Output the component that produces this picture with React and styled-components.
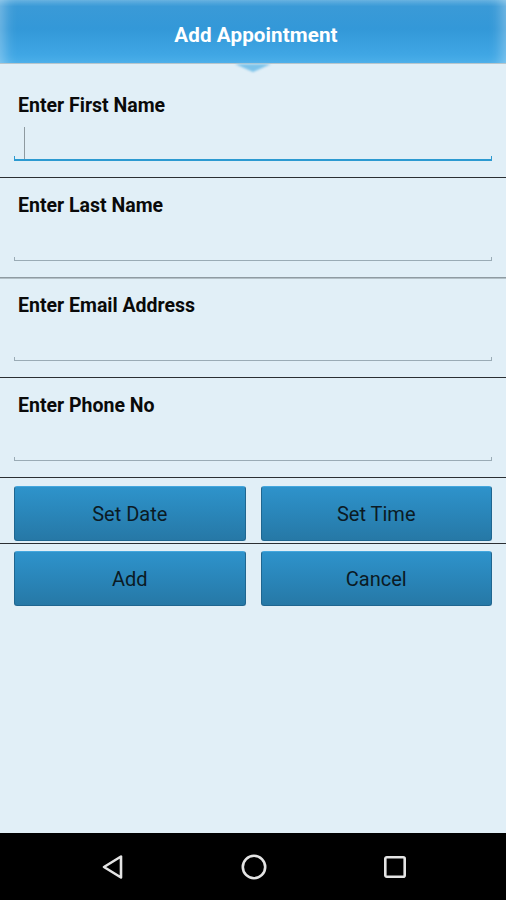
import styled, { createGlobalStyle } from "styled-components";

const GlobalStyle = createGlobalStyle`
  html, body {
    margin: 0;
    padding: 0;
    background: #e1eff7;
  }

  body {
    font-family: Roboto, "Noto Sans", "Liberation Sans", sans-serif;
  }
`;

const fields = [
  { label: "Enter First Name", focused: true },
  { label: "Enter Last Name", soft: true },
  { label: "Enter Email Address" },
  { label: "Enter Phone No" },
];

export default function App() {
  return (
    <>
      <GlobalStyle />
      <Screen>
        <Header>
          <strong className="title">Add Appointment</strong>
        </Header>

        <Content>
          {fields.map((f) => (
            <Field key={f.label} $soft={f.soft}>
              <Label>{f.label}</Label>
              <InputLine $focused={f.focused}>
                {f.focused && <Caret />}
              </InputLine>
            </Field>
          ))}

          <ButtonRow $divider>
            <Button>Set Date</Button>
            <Button>Set Time</Button>
          </ButtonRow>

          <ButtonRow $top={7}>
            <Button>Add</Button>
            <Button>Cancel</Button>
          </ButtonRow>
        </Content>

        <NavBar>
          <svg width="26" height="28" viewBox="0 0 26 28">
            <path
              d="M21 3.5 L21 24.5 L4 14 Z"
              fill="none"
              stroke="#e4e4e4"
              strokeWidth="2.6"
              strokeLinejoin="round"
            />
          </svg>
          <svg width="28" height="28" viewBox="0 0 28 28">
            <circle
              cx="14"
              cy="14"
              r="11.2"
              fill="none"
              stroke="#e4e4e4"
              strokeWidth="2.6"
            />
          </svg>
          <svg width="26" height="26" viewBox="0 0 26 26">
            <rect
              x="3.3"
              y="3.3"
              width="19.4"
              height="19.4"
              rx="1.5"
              fill="none"
              stroke="#e4e4e4"
              strokeWidth="2.6"
            />
          </svg>
        </NavBar>
      </Screen>
    </>
  );
}

const Screen = styled.main`
  display: flex;
  flex-direction: column;
  width: 506px;
  height: 900px;
  background: #e1eff7;
  overflow: hidden;
`;

const Header = styled.header`
  position: relative;
  display: flex;
  justify-content: center;
  align-items: center;
  height: 64px;
  flex-shrink: 0;
  padding-left: 6px;
  background: linear-gradient(
    to bottom,
    #62b0e0 0%,
    #3a9ad7 10%,
    #3398d8 45%,
    #3fa6e4 85%,
    #4cb0ea 100%
  );
  box-shadow: inset 0 -1px 0 #b8c6cc,
    inset 14px 0 14px -10px rgba(255, 255, 255, 0.35),
    inset -14px 0 14px -10px rgba(255, 255, 255, 0.35);

  .title {
    color: #fff;
    font-size: 20.6px;
    font-weight: 700;
    letter-spacing: 0.1px;
    margin-top: 5px;
  }

  &::after {
    content: "";
    position: absolute;
    left: 50%;
    bottom: -8px;
    margin-left: -18px;
    width: 0;
    height: 0;
    border-left: 18px solid transparent;
    border-right: 18px solid transparent;
    border-top: 8px solid #7cc3ea;
    filter: blur(0.8px);
  }
`;

const Content = styled.section`
  display: flex;
  flex-direction: column;
  flex: 1;
  padding-top: 14px;
`;

const Field = styled.div`
  display: flex;
  flex-direction: column;
  height: 100px;
  box-sizing: border-box;
  padding: 17px 14px 0;
  border-bottom: 1px solid ${({ $soft }) => ($soft ? "#8f9ba2" : "#2b2f33")};
  box-shadow: ${({ $soft }) => ($soft ? "0 1px 0 #b3c0c7" : "none")};
`;

const Label = styled.label`
  padding-left: 4px;
  color: #0a0a0a;
  font-size: 19.5px;
  font-weight: 700;
  line-height: 22px;
`;

const InputLine = styled.div`
  position: relative;
  height: 34px;
  margin-top: 10px;
  box-sizing: border-box;
  border-bottom: ${({ $focused }) =>
    $focused ? "2px solid #2c9ad1" : "1px solid #9aabb5"};

  &::before,
  &::after {
    content: "";
    position: absolute;
    bottom: 0;
    width: 1px;
    height: 3px;
    background: ${({ $focused }) => ($focused ? "#2c9ad1" : "#9aabb5")};
  }

  &::before {
    left: 0;
  }

  &::after {
    right: 0;
  }
`;

const Caret = styled.span`
  position: absolute;
  left: 10px;
  top: 0;
  width: 1px;
  height: 32px;
  background: #8e9aa0;
`;

const ButtonRow = styled.div`
  display: grid;
  grid-template-columns: 1fr 1fr;
  gap: 15px;
  padding: ${({ $top }) => $top ?? 8}px 14px
    ${({ $divider }) => ($divider ? "2px" : "0")};
  border-bottom: ${({ $divider }) => ($divider ? "1px solid #2b2f33" : "none")};
`;

const Button = styled.button`
  height: 55px;
  box-sizing: border-box;
  border: 1px solid #1f6690;
  border-top-color: #44a7de;
  border-radius: 3px;
  background: linear-gradient(to bottom, #2e93cb 0%, #2a87bb 45%, #2678a6 100%);
  color: #0b1a24;
  font-family: Roboto, "Noto Sans", "Liberation Sans", sans-serif;
  font-size: 20px;
  font-weight: 400;
  padding: 0;
`;

const NavBar = styled.nav`
  display: flex;
  justify-content: center;
  align-items: center;
  gap: 114px;
  height: 67px;
  flex-shrink: 0;
  background: #000;
  padding-left: 2px;
`;
